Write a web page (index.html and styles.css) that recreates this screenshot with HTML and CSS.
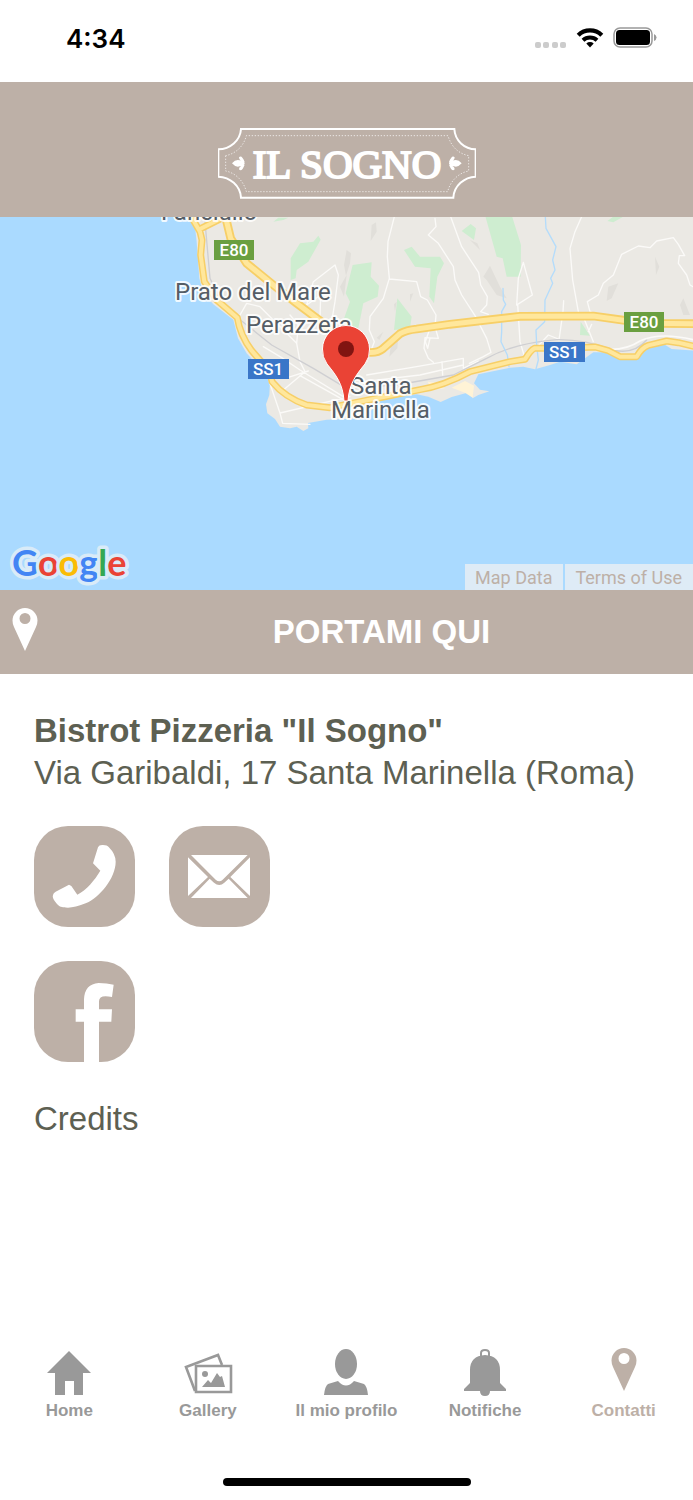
FILE: index.html
```html
<!DOCTYPE html>
<html lang="it">
<head>
<meta charset="utf-8">
<meta name="viewport" content="width=device-width, initial-scale=1">
<title>Il Sogno - Contatti</title>
<link rel="stylesheet" href="styles.css">
</head>
<body>
<div class="app">
  <div class="status">
    <span class="time">4:34</span>
    <div class="indicators">
      <svg class="signal" viewBox="0 0 32 8" aria-hidden="true"><rect y="1" width="6" height="6" rx="2"/><rect x="8" y="1" width="6" height="6" rx="2"/><rect x="17" y="1" width="6" height="6" rx="2"/><rect x="25" y="1" width="6" height="6" rx="2"/></svg>
      <svg class="wifi" viewBox="0 0 28 22" aria-hidden="true"><path d="M2.200 8.200a17 17 0 0 1 23.600 0" fill="none" stroke="#000" stroke-width="4.300"/><path d="M7 13.200a10.200 10.200 0 0 1 14 0" fill="none" stroke="#000" stroke-width="4"/><path d="M10.300 16.400a5.500 5.500 0 0 1 7.400 0L14 20.500z"/></svg>
      <svg class="battery" viewBox="0 0 44 22" aria-hidden="true"><rect x="1" y="1" width="38" height="19" rx="6" fill="none" stroke="#999" stroke-width="1.500"/><rect x="3" y="3" width="34" height="15" rx="3.500"/><path d="M41 7q2.500 1 2.500 3.500T41 14z" fill="#999"/></svg>
    </div>
  </div>

  <header class="brand">
    <svg class="logo" viewBox="0 0 258 72" role="img" aria-label="Il Sogno">
      <g transform="translate(-13 -13) scale(.33333)" fill="none" stroke="#fff">
        <path d="M40 103V185C75 186 106 212 108 248H745C747 212 778 186 812 185V103C778 102 750 77 748 42H108C106 77 75 102 40 103Z" stroke-width="6"/>
        <path d="M62 122V168C92 174 116 198 124 230H728C736 198 760 174 791 168V122C760 116 738 94 729 62H124C116 94 92 116 62 122Z" stroke-width="3" stroke-dasharray="4 5" opacity=".7"/>
        <g fill="#fff" stroke="none">
          <path id="petals" d="M81 145Q92 132 104 136Q119 138 119 145Q119 152 104 154Q92 158 81 145ZM102 127Q110 118 119 141Q102 138 102 127ZM102 163Q102 152 119 149Q110 172 102 163Z"/>
          <use href="#petals" transform="translate(851 0) scale(-1 1)"/>
        </g>
      </g>
      <text x="129" y="50" class="logo-text">IL SOGNO</text>
    </svg>
  </header>

  <main>
    <section class="map" aria-label="Mappa">
      <svg class="map-art" viewBox="0 0 693 373" preserveAspectRatio="xMidYMid slice">
        <g transform="translate(150 -2) scale(.33333)" fill="none" stroke-linejoin="round" stroke-linecap="round">
          <path fill="#ebe9e4" d="M113 0L135 35L140 80L148 190L160 235L190 268L250 314L264 370L290 415L330 460L360 500L358 540L348 568L352 595L375 612L390 635L420 640L440 635L460 648L475 640L474 624L530 614L640 610L700 550L800 538L835 545L872 561L905 546L960 531L968 550L985 540L1018 529L990 524L972 505L985 478L1080 458L1120 455L1155 463L1200 450L1230 440L1280 448L1330 412L1370 412L1400 430L1460 430L1490 396L1540 386L1565 402L1640 407V0Z"/>
          <path fill="#fff3d6" d="M905 518L945 498L972 512L968 548L945 533ZM833 500L857 503L885 520L845 525Z"/>
          <path fill="#ceedd0" d="M370 20L385 8H415L400 15ZM422 195V130L450 85L490 80L505 62L512 74L475 140L440 165L437 190ZM608 150L665 142L662 185L687 212L683 245L640 265L625 340L575 330L600 260L587 235ZM742 250L785 305L780 340L732 345ZM762 105L785 95L810 125L870 125L882 145L862 185L852 265L838 245L842 160L795 155ZM935 48L962 27L978 40L972 75ZM1005 0H1085L1113 90L1112 185H1070L1058 130L1040 125ZM1372 18L1390 5H1420L1390 22ZM1292 320L1320 362L1290 360Z"/>
          <path fill="#e1dfda" d="M590 105L603 115L600 145L588 182L582 150ZM665 30L678 22L680 50L662 78ZM570 215L590 180L582 245ZM722 395L745 365L742 400L718 425ZM735 290L740 260L732 268ZM1000 185L1020 152L1050 215L1070 250L1040 240L1010 195ZM1375 215L1405 205L1385 250L1370 258ZM1515 125L1528 155L1518 180ZM1590 270L1600 250L1620 300L1600 300ZM960 75L982 85L990 105ZM780 238L790 235L780 260ZM680 368L700 350L688 375Z"/>
          <path stroke="#fbfaf8" stroke-width="4" d="M733 5L714 80L712 125L718 190L700 250L660 305L658 345L673 380L650 440M718 192L800 200L812 245L832 255L858 300L855 335L865 370L825 368L822 400L835 430L850 442M855 10L858 35L835 60L865 85L910 155L915 195L935 240L975 302L1010 370L1023 412L1000 425L958 445M902 5L935 95L986 173L992 210L1012 245L1010 270L992 290L1015 298M270 300L290 265L330 275L440 385L450 440L465 470L400 525M510 310L512 240L470 270L490 200L555 150L565 180L555 260L545 320M340 395L395 428L450 465L580 545M440 385L445 330L420 300M358 500L390 594L600 545M390 594L398 625L480 628M415 487L475 468M450 482L590 560M650 480L800 455L940 430L940 460L985 438M640 500L810 480L940 450M876 440L878 480M840 370L833 400L826 380L840 340M1295 5L1275 50L1260 100L1268 195L1285 290M1241 257L1239 290L1227 375M1120 142L1147 240L1103 268L1110 380L1122 420M1120 142L1105 190L1100 270M1350 305L1320 290L1312 260L1345 240L1360 205L1390 180L1415 118L1465 93L1500 98L1520 78L1570 68L1585 88L1604 122L1588 122L1585 145L1610 180L1620 210L1640 222M1300 305L1330 380M1325 328L1315 350M1165 392L1195 360L1225 372"/>
          <path stroke="#cfcfd2" stroke-width="4" d="M165 20L180 190L215 265L275 318L365 390L490 460L590 520L740 510L910 480L1010 430Q1090 385 1220 374Q1300 372 1390 405Q1450 420 1490 375"/>
          <path stroke="#b4dcfb" stroke-width="4" d="M1186 5L1188 40L1218 95L1208 135L1215 165L1202 190L1208 205L1185 255L1184 320L1158 345L1160 390L1165 435L1158 462M1059 220L1060 255L1067 268L1055 290L1055 350L1053 380L1072 420L1077 455"/>
          <path stroke="#fbfaf8" stroke-width="5" d="M1375 403Q1430 405 1470 378Q1530 350 1629 374"/>
          <path stroke="#f7cf67" stroke-width="21" d="M118 -5L150 50L156 75L152 120L163 200L200 255L262 308Q270 360 305 407L360 470L366 500Q405 548 470 570L540 578L620 562L700 546L810 524Q880 513 960 470L1080 440L1125 433Q1142 405 1153 400L1240 400L1335 396L1375 407L1410 425L1460 425Q1475 398 1495 391L1550 378L1585 383L1640 396M150 42L210 12"/>
          <path stroke="#ffe79c" stroke-width="12" d="M118 -5L150 50L156 75L152 120L163 200L200 255L262 308Q270 360 305 407L360 470L366 500Q405 548 470 570L540 578L620 562L700 546L810 524Q880 513 960 470L1080 440L1125 433Q1142 405 1153 400L1240 400L1335 396L1375 407L1410 425L1460 425Q1475 398 1495 391L1550 378L1585 383L1640 396M150 42L210 12"/>
          <path stroke="#f7cf67" stroke-width="26" d="M224 -5L242 70L290 145L370 210L440 265L520 325L610 400Q670 425 700 400L750 356Q770 345 800 342L900 328L1110 304L1330 303L1430 317L1500 325L1640 326"/>
          <path stroke="#ffe79c" stroke-width="15" d="M224 -5L242 70L290 145L370 210L440 265L520 325L610 400Q670 425 700 400L750 356Q770 345 800 342L900 328L1110 304L1330 303L1430 317L1500 325L1640 326"/>
        </g>
        <g class="place">
          <text x="161" y="3">Fanciullo</text>
          <text x="175" y="83">Prato del Mare</text>
          <text x="246" y="116">Perazzeta</text>
          <text x="350" y="177">Santa</text>
          <text x="331" y="201">Marinella</text>
        </g>
        <g class="shield">
          <path fill="#6a9f40" d="M214 23h40v20h-40zM624 95h40v20h-40z"/>
          <path fill="#3a76c8" d="M248 142h41v20h-41zM544 125h41v20h-41z"/>
          <text x="234" y="39">E80</text><text x="644" y="111">E80</text>
          <text x="268" y="158">SS1</text><text x="564" y="141">SS1</text>
        </g>
        <path d="M344 184C343 167 336 158 327 147Q322 140 322.500 132A23.500 23.500 0 0 1 369.500 132Q370 140 365 147C356 158 349 167 348 184Z" fill="#ea4335" stroke="#fff" stroke-width="1"/>
        <circle cx="346" cy="132" r="8" fill="#811411"/>
        <text class="google" x="12" y="359"><tspan fill="#4285f4">G</tspan><tspan fill="#ea4335">o</tspan><tspan fill="#fbbc05">o</tspan><tspan fill="#4285f4">g</tspan><tspan fill="#34a853">l</tspan><tspan fill="#ea4335">e</tspan></text>
      </svg>
      <div class="map-links"><a href="#map-data">Map Data</a><a href="#terms">Terms of Use</a></div>
    </section>

    <button class="directions" type="button">
      <svg class="pin" viewBox="0 0 26 45" aria-hidden="true"><path fill-rule="evenodd" d="M13 1A12.500 12.500 0 0 0 .5 13.500Q.5 17 2 20L13 44L24 20Q25.500 17 25.500 13.500A12.500 12.500 0 0 0 13 1ZM13 6a5.500 5.500 0 1 1 0 11a5.500 5.500 0 0 1 0-11Z"/></svg>
      <span>PORTAMI QUI</span>
    </button>

    <section class="details">
      <h1>Bistrot Pizzeria "Il Sogno"</h1>
      <p>Via Garibaldi, 17 Santa Marinella (Roma)</p>
      <div class="contacts">
        <a href="#phone" aria-label="Telefono"><svg viewBox="43 48 303 303"><path d="M235 112Q238 104 250 105Q263 105 267 111Q288 132 288 155C288 205 238 263 200 279Q165 293 145 293C125 293 118 289 112 282Q96 264 100 255Q101 249 108 245L148 224L155 228L173 254C200 240 225 211 242 182L220 160Z"/></svg></a>
        <a href="#mail" aria-label="Email"><svg viewBox="447 48 303 303"><path d="M513 135H683L608 209Q598 218 587 209ZM504 142L564 201L504 258ZM690 142V258L631 201ZM569 206L582 218Q598 232 613 218L626 206L683 264H513Z"/></svg></a>
        <a href="#facebook" aria-label="Facebook"><svg viewBox="43 453 303 303"><path d="M193 757V635H168V598H193V568Q195 522 237 519Q262 519 282 524L277 561Q238 552 238 574V598H277L275 635H238V757Z"/></svg></a>
      </div>
      <a class="credits" href="#credits">Credits</a>
    </section>
  </main>

  <nav class="tabs">
    <a href="#home"><svg viewBox="0 0 50 52" aria-hidden="true"><path d="M25 8L47 30H39V52H30V38H21V52H11V30H3Z"/></svg>Home</a>
    <a href="#gallery"><svg viewBox="0 0 50 52" aria-hidden="true"><g fill="none" stroke="#999" stroke-width="2.600"><path d="M13 23H48V49H13Z"/><path d="M12 48L3 24L35 12L39 22"/></g><circle cx="22" cy="31" r="3"/><path d="M19 44L25 37L28 40L34 30L37 34L39 33L42 44Z"/></svg>Gallery</a>
    <a href="#profile"><svg viewBox="0 0 50 52" aria-hidden="true"><ellipse cx="25" cy="21" rx="11" ry="15"/><path d="M3 52Q4 43 7 41L17 38Q25 47 33 38L43 41Q46 43 47 52Z"/></svg>Il mio profilo</a>
    <a href="#notifications"><svg viewBox="0 0 50 52" aria-hidden="true"><path d="M21 14V10Q21 7 25 7T29 10V14" fill="none" stroke="#999" stroke-width="2"/><path d="M25 12Q40 13 40 27V40L46 46V48H30Q30 53 25 53T20 48H4V46L10 40V27Q10 13 25 12Z"/></svg>Notifiche</a>
    <a class="active" href="#contacts" aria-current="page"><svg viewBox="0 0 50 52" aria-hidden="true"><path fill-rule="evenodd" d="M25 5A12.500 12.500 0 0 0 12.500 17.500Q12.500 21 14 24L25 48L36 24Q37.500 21 37.500 17.500A12.500 12.500 0 0 0 25 5ZM25 10a5.500 5.500 0 1 1 0 11a5.500 5.500 0 0 1 0-11Z"/></svg>Contatti</a>
  </nav>
  <div class="home-bar"></div>
</div>
</body>
</html>
```
FILE: styles.css
```css
* { box-sizing: border-box; }
body {
  margin: 0;
  background: #fff;
  color: #5d6052;
  font-family: "Liberation Sans", Arial, sans-serif;
}
a { color: inherit; text-decoration: none; }
svg { display: block; }
h1, p { margin: 0; }
.app { display: flex; flex-direction: column; min-height: 100vh; }
main { flex: 1; }

.status {
  display: flex;
  justify-content: space-between;
  align-items: center;
  height: 82px;
  padding: 0 36px 6px 66px;
}
.time { color: #000; font: 600 26px Inter, sans-serif; }
.indicators { display: flex; align-items: center; gap: 9px; }
.signal { width: 32px; height: 8px; margin-top: 14px; fill: #ccc; }
.wifi { width: 28px; height: 22px; }
.battery { width: 44px; height: 22px; }

.brand {
  display: flex;
  justify-content: center;
  height: 135px;
  padding-top: 46px;
  background: #bdb0a7;
}
.logo { width: 258px; height: 72px; }
.logo-text {
  font: 41px "Liberation Serif", serif;
  text-anchor: middle;
  fill: #fff;
  stroke: #fff;
  stroke-width: 2px;
}

.map { position: relative; height: 373px; background: #aadaff; overflow: hidden; }
.map-art { width: 100%; height: 100%; }
.place, .google { paint-order: stroke; stroke-linejoin: round; }
.place {
  font: 24px Roboto, sans-serif;
  fill: #555d66;
  stroke: #fff;
  stroke-opacity: .85;
  stroke-width: 4px;
}
.shield text { font: 500 17px Roboto, sans-serif; fill: #fff; text-anchor: middle; }
.google { font: 700 36px Lato, sans-serif; }
.google tspan { stroke: #d9ebf8; stroke-width: 7px; }
.map-links { position: absolute; right: 0; bottom: 0; display: flex; gap: 2px; }
.map-links a {
  padding: 2px 11px 0 10px;
  background: #deebf6;
  color: #bdb0a7;
  font: 18px/24px Roboto, sans-serif;
}

.directions {
  display: flex;
  align-items: center;
  width: 100%;
  height: 84px;
  padding: 0 0 0 12px;
  border: 0;
  background: #bdb0a7;
  color: #fff;
  font: 700 33px "Liberation Sans", Arial, sans-serif;
}
.directions span { flex: 1; padding-left: 32px; text-align: center; }
.pin { width: 26px; height: 45px; margin-bottom: 6px; fill: #fff; }

.details { padding: 36px 34px; font-size: 33px; line-height: 42px; }
.details h1 { font-size: 33px; }
.contacts {
  display: grid;
  grid-template-columns: 101px 101px;
  gap: 34px;
  margin: 32px 0 36px;
}
.contacts a { height: 101px; border-radius: 34px; background: #bdb0a7; overflow: hidden; }
.contacts svg { width: 100%; height: 100%; fill: #fff; }

.tabs { display: flex; }
.tabs a {
  flex: 1;
  display: flex;
  flex-direction: column;
  align-items: center;
  gap: 6px;
  color: #999;
  font-size: 17px;
  font-weight: 700;
  line-height: 20px;
}
.tabs svg { width: 50px; height: 52px; fill: currentColor; overflow: visible; }
.tabs .active { color: #bdb0a7; }
.home-bar { width: 248px; height: 8px; margin: 57px auto 14px; border-radius: 4px; background: #000; }
```
